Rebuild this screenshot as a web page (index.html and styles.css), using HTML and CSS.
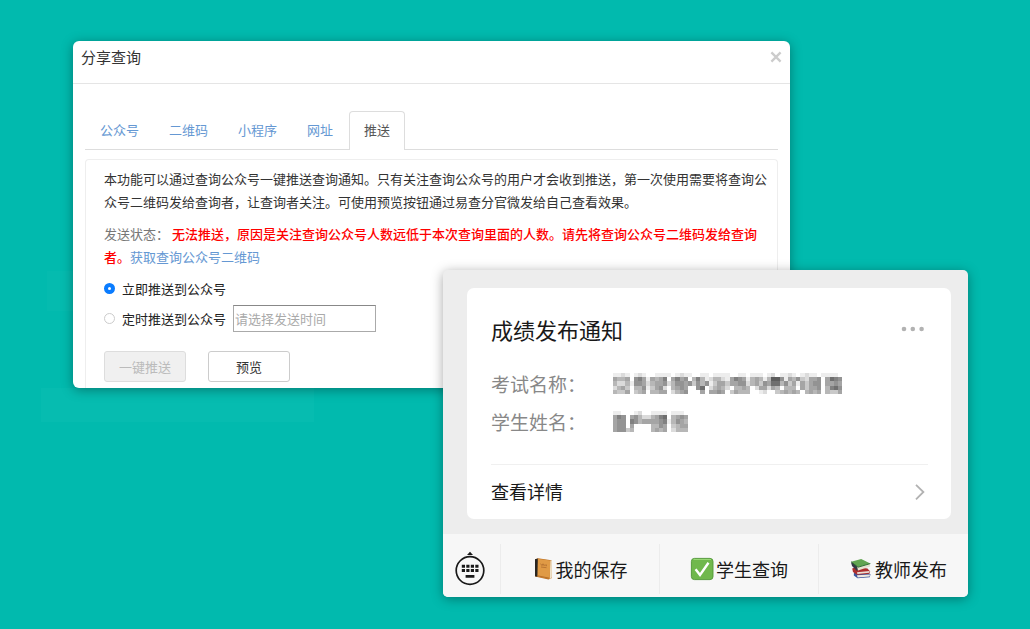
FILE: index.html
```html
<!DOCTYPE html>
<html lang="zh-CN">
<head>
<meta charset="utf-8">
<meta name="viewport" content="width=device-width, initial-scale=1">
<title>分享查询</title>
<link rel="stylesheet" href="styles.css">
</head>
<body>
<main class="stage">
  <section class="dialog">
    <header class="dialog-head">
      <h1 class="dialog-title">分享查询</h1>
      <button class="close" type="button" aria-label="关闭">
        <svg width="12" height="12" viewBox="0 0 12 12"><path d="M1.4 1.4L10.6 10.6M10.6 1.4L1.4 10.6" stroke="#ccc" stroke-width="2.3"/></svg>
      </button>
    </header>
    <div class="dialog-body">
      <nav class="tabs">
        <a class="tab" href="#">公众号</a>
        <a class="tab" href="#">二维码</a>
        <a class="tab" href="#">小程序</a>
        <a class="tab" href="#">网址</a>
        <a class="tab tab-active" href="#">推送</a>
      </nav>
      <form class="pane">
        <p class="text">本功能可以通过查询公众号一键推送查询通知。只有关注查询公众号的用户才会收到推送，第一次使用需要将查询公众号二维码发给查询者，让查询者关注。可使用预览按钮通过易查分官微发给自己查看效果。</p>
        <p class="text"><span class="muted">发送状态：</span><strong class="warn">无法推送，原因是关注查询公众号人数远低于本次查询里面的人数。请先将查询公众号二维码发给查询者。</strong><a class="link" href="#">获取查询公众号二维码</a></p>
        <div class="choice">
          <input class="radio" type="radio" name="when" id="now" checked>
          <label for="now">立即推送到公众号</label>
        </div>
        <div class="choice choice-timed">
          <input class="radio" type="radio" name="when" id="later">
          <label for="later">定时推送到公众号</label>
          <input class="time" type="text" placeholder="请选择发送时间" aria-label="发送时间">
        </div>
        <div class="actions">
          <button class="btn" type="button" disabled>一键推送</button>
          <button class="btn" type="button">预览</button>
        </div>
      </form>
    </div>
  </section>

  <section class="phone">
    <div class="chat">
      <article class="card">
        <div class="card-head">
          <h2 class="card-title">成绩发布通知</h2>
          <button class="more" type="button" aria-label="更多">
            <svg width="24" height="6" viewBox="0 0 24 6" fill="#b2b2b2"><circle cx="3" cy="3" r="2.3"/><circle cx="11.8" cy="3" r="2.3"/><circle cx="20.6" cy="3" r="2.3"/></svg>
          </button>
        </div>
        <dl class="fields">
          <dt>考试名称：</dt>
          <dd><svg class="mosaic" width="229" height="21" viewBox="0 0 55 5" preserveAspectRatio="none" data-rows="1121012100111101211001101111001101110120112101211011110 5445067515457057560474124421576514541499615463255605876 4224166524556246656364613553556624536588463515356605565 2453044613562045650068024542044540255254044405355604786 4335034504455024560005055650354440012003454540454504335" aria-hidden="true"></svg></dd>
          <dt>学生姓名：</dt>
          <dd><svg class="mosaic" width="75" height="21" viewBox="0 0 18 5" preserveAspectRatio="none" data-rows="110001200111101110 576056422457804565 566076455556714654 566050000446503455 566340000454502444" aria-hidden="true"></svg></dd>
        </dl>
        <a class="detail" href="#">查看详情
          <svg width="12" height="18" viewBox="0 0 12 18" fill="none"><path d="M2 1.8L9.4 9L2 16.4" stroke="#b2b2b2" stroke-width="1.8"/></svg>
        </a>
      </article>
    </div>
    <nav class="menu">
      <button class="key" type="button" aria-label="键盘">
        <svg width="32" height="36" viewBox="0 0 32 36">
          <path d="M13 4L16 .8L19 4Z" fill="#191919"/>
          <circle cx="16" cy="19.5" r="13.8" fill="none" stroke="#191919" stroke-width="1.7"/>
          <path d="M7.8 15.2H24.6M7.8 19.6H24.6" stroke="#191919" stroke-width="3" stroke-dasharray="3.2 1.3"/>
          <path d="M11.6 25.4H20.4" stroke="#191919" stroke-width="2.6"/>
        </svg>
      </button>
      <button class="item" type="button">
        <svg width="21" height="24" viewBox="0 0 21 24">
          <path d="M2 2.5L5 1.2L18.5 3.2L19 21L15.5 22.6L2 19.6Z" fill="#b96f25"/>
          <path d="M17.2 3.4L18.9 3.8V20.6L16.8 21.9Z" fill="#eee2cb"/>
          <path d="M4.3 1.8L17.3 3.6L16.8 21.8L3.8 19.4Z" fill="#e09a45"/>
          <path d="M2 2.2L4.8 1.5L4.4 19.8L2 19.2Z" fill="#292521"/>
          <path d="M7.5 6.6L9 8.6L10 6.8L11 8.8M12 7.3V9M13.4 7.5V9.2M8 10L13.5 10.7" fill="none" stroke="#a9652b" stroke-width=".7"/>
          <path d="M4.5 18.8L16 21.1" stroke="#ae651f" stroke-width=".8"/>
        </svg>
        <span>我的保存</span>
      </button>
      <button class="item" type="button">
        <svg width="24" height="24" viewBox="0 0 24 24">
          <rect x="1.4" y="1.4" width="21.6" height="21.2" rx="3" fill="#70b84d" stroke="#4f9637" stroke-width=".9"/>
          <path d="M3.5 2.5H21" stroke="#98d873" stroke-width="1"/>
          <path d="M5.6 12.2L10 18L18.5 5.8" fill="none" stroke="#fff" stroke-width="2.4"/>
        </svg>
        <span>学生查询</span>
      </button>
      <button class="item" type="button">
        <svg width="24" height="24" viewBox="0 0 24 24">
          <path d="M5 15.5L18 15L21.5 17.3L20.8 20.3L8.6 21.3L4.8 18.5Z" fill="#3c559d"/>
          <path d="M8 18.3L21 17.6L20.6 19.6L8.6 20.4Z" fill="#eee9e0"/>
          <path d="M3.2 11.6L7 10L18.5 11.5L21.2 14.4L20.2 16.8L8 17.8L4 15Z" fill="#ad2e2d"/>
          <path d="M8 15.2L20.7 14L20.2 15.8L8.4 16.9Z" fill="#eadfd6"/>
          <path d="M2 5.3L7 7L9.2 12.2L8 13.9L3 9Z" fill="#343944"/>
          <path d="M8.2 10L20.8 7.2L21.3 9.5L9 13.4Z" fill="#e5e3d0"/>
          <path d="M2.2 4.7L12.2 2L21.3 6.5L9 10Z" fill="#62a551"/>
          <path d="M2.2 4.8L9 10.2L21.3 6.6" fill="none" stroke="#2f6f32" stroke-width="1"/>
        </svg>
        <span>教师发布</span>
      </button>
    </nav>
  </section>
</main>
<script src="mosaic.js"></script>
</body>
</html>
```
FILE: styles.css
```css
* { box-sizing: border-box; }

body {
  margin: 0;
  background: #01baae;
  color: #333;
  font: 13px/23px "Noto Sans CJK SC", sans-serif;
}

h1, h2, p, dl, dd { margin: 0; font-weight: 400; }
a { color: #6598d3; text-decoration: none; }
button, input { font: inherit; color: inherit; }
button { padding: 0; border: 0; background: none; }
svg { display: block; flex: none; }

.stage {
  position: relative;
  min-height: 100vh;
  padding: 41px 240px 32px 73px;
  background:
    linear-gradient(#06bcb0, #06bcb0) 41px 388px / 273px 34px no-repeat,
    linear-gradient(#05bbaf, #05bbaf) 47px 271px / 40px 40px no-repeat;
}

.dialog {
  overflow: hidden;
  border-radius: 6px;
  background: #fff;
  box-shadow: 0 2px 12px rgba(0, 0, 0, .35);
}
.dialog-head {
  display: flex;
  justify-content: space-between;
  align-items: flex-start;
  padding: 4px 8px 14px;
  border-bottom: 1px solid #e5e5e5;
}
.dialog-title { font-size: 15px; line-height: 24px; }
.close { padding: 6px 0; }
.dialog-body { padding: 27px 12px 0; }

.tabs {
  display: flex;
  gap: 2px;
  padding-left: 1px;
  border-bottom: 1px solid #ddd;
}
.tab {
  margin-bottom: -1px;
  padding: 6px 13px 9px;
  border: 1px solid transparent;
  border-bottom: 0;
  border-radius: 4px 4px 0 0;
}
.tab-active { padding-right: 14px; padding-left: 14px; border-color: #ddd; background: #fff; color: #555; }

.pane {
  display: flex;
  flex-direction: column;
  margin-top: 9px;
  padding: 7px 8px 6px 18px;
  border: 1px solid #eee;
  border-bottom: 0;
  border-radius: 4px 4px 0 0;
}
.text + .text { margin-top: 9px; }
.muted { margin-right: 3px; color: #777; }
.warn { color: #f00; font-weight: 500; }

.choice { display: flex; align-items: center; gap: 7px; margin-top: 9px; color: #222; }
.choice-timed { margin-top: 5px; }
.radio {
  appearance: none;
  width: 11px;
  height: 11px;
  margin: 0;
  border: 1px solid #ccc;
  border-radius: 50%;
  background: #fff;
}
.radio:checked { border: 4px solid #0a7cff; }
.time {
  width: 143px;
  height: 27px;
  padding: 0 1px;
  border: 1px solid #aaa;
  border-top-color: #888;
}
.time::placeholder { color: #aaa; }

.actions { display: flex; gap: 22px; margin-top: 19px; }
.btn {
  width: 82px;
  height: 31px;
  padding-bottom: 1px;
  border: 1px solid #ccc;
  border-radius: 3px;
  background: #fff;
}
.btn:disabled { border-color: #ddd; background: #f0f0f0; color: #bbb; }

.phone {
  position: absolute;
  top: 270px;
  right: 62px;
  left: 443px;
  overflow: hidden;
  border-radius: 5px;
  background: #ededed;
  color: #191919;
  box-shadow: 0 2px 12px rgba(0, 0, 0, .35);
}
.chat { padding: 18px 17px 15px 24px; }
.card { padding: 26px 23px 1px 24px; border-radius: 7px; background: #fff; }
.card-head { display: flex; justify-content: space-between; }
.card-title { font-size: 22px; line-height: 30px; }
.more { display: flex; padding: 12px 3px 0; }
.fields {
  display: grid;
  grid-template-columns: 122px 1fr;
  align-items: center;
  padding: 21px 0 23px;
  border-bottom: 1px solid #f0f0f0;
  color: #888;
  font-size: 19px;
  line-height: 38px;
}
.fields dd { padding-bottom: 2px; }
.mosaic { shape-rendering: crispEdges; }
.detail {
  display: flex;
  justify-content: space-between;
  align-items: center;
  padding-right: 2px;
  color: inherit;
  font-size: 18px;
  line-height: 53px;
}

.menu {
  display: flex;
  margin-right: -9px;
  padding: 10px 0 3px;
  background: #f7f7f7;
}
.key { display: flex; justify-content: center; align-items: center; width: 57px; padding-right: 3px; }
.item {
  display: flex;
  flex: 1;
  justify-content: center;
  align-items: center;
  gap: 2px;
  border-left: 1px solid #ececec;
  font-size: 18px;
  line-height: 50px;
}
```
FILE: mosaic.js
```js
// Fills each censored value with grey cells; a digit is the darkness of one cell.
document.querySelectorAll(".mosaic").forEach((svg) => {
  svg.dataset.rows.split(" ").forEach((row, y) => {
    [...row].forEach((digit, x) => {
      if (digit === "0") return;
      const cell = document.createElementNS("http://www.w3.org/2000/svg", "rect");
      const shade = 255 - digit * 18;
      cell.setAttribute("x", x);
      cell.setAttribute("y", y);
      cell.setAttribute("width", 1);
      cell.setAttribute("height", 1);
      cell.setAttribute("fill", `rgb(${shade},${shade},${shade})`);
      svg.append(cell);
    });
  });
});
```
